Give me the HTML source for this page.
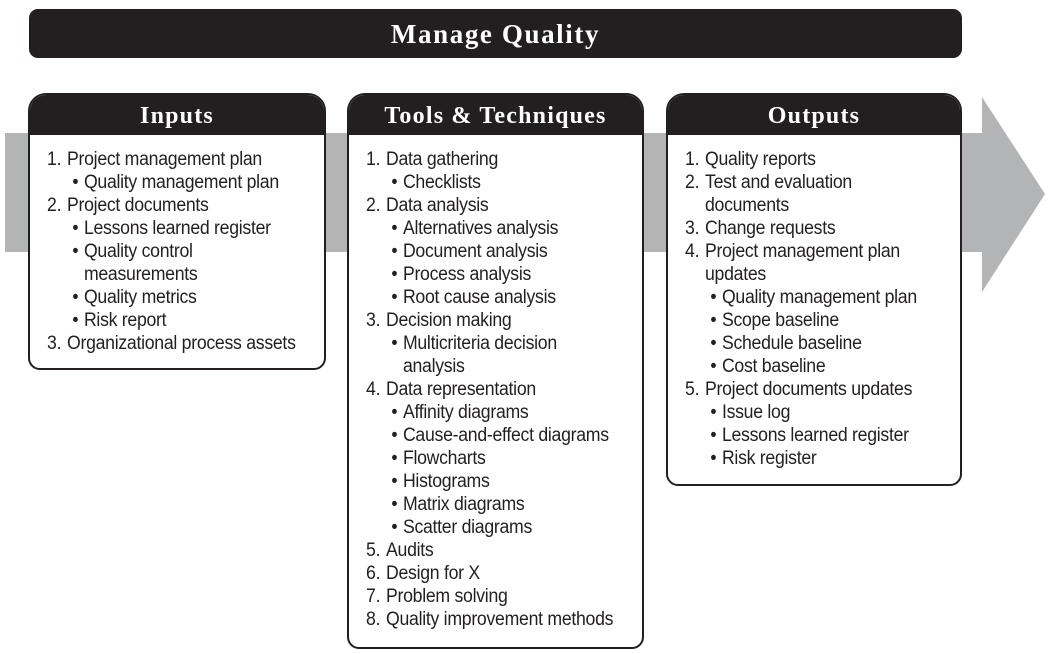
<!DOCTYPE html>
<html><head><meta charset="utf-8"><style>
*{margin:0;padding:0;box-sizing:border-box}
body{width:1053px;height:654px;background:#fff;position:relative;overflow:hidden;font-family:"Liberation Sans",sans-serif;color:#231f20}
.title{position:absolute;left:29px;top:9px;width:933px;height:49px;background:#231f20;border-radius:9px;color:#fff;font:bold 27px/50px "Liberation Serif",serif;text-align:center;letter-spacing:1.6px}
.band{position:absolute;left:5px;top:133px;width:980px;height:119px;background:#b3b4b6}
.box{position:absolute;top:93px;border:2px solid #231f20;border-radius:18px 18px 12px 12px;background:#fff;overflow:hidden}
.hd{height:40px;background:#231f20;color:#fff;font:bold 24px/42px "Liberation Serif",serif;text-align:center;letter-spacing:1.2px}
.bd{padding-top:13px}
.l{height:23px;line-height:23px;font-size:19px;white-space:nowrap;position:relative;letter-spacing:-0.3px;transform:scaleX(0.93);transform-origin:0 50%}
.l span{position:absolute}
.n{padding-left:39.8px}.n span{left:18.3px}
.c{padding-left:39.8px}
.b{padding-left:58px}.b span{left:45.5px}
</style></head><body>
<div class="title">Manage Quality</div>
<div class="band"></div>
<svg style="position:absolute;left:0;top:0" width="1053" height="654"><polygon points="982,97 1045,194 982,292" fill="#b3b4b6"/></svg>

<div class="box" style="left:28px;width:298px;height:277px">
<div class="hd">Inputs</div>
<div class="bd">
<div class="l n"><span>1.</span>Project management plan</div>
<div class="l b"><span>•</span>Quality management plan</div>
<div class="l n"><span>2.</span>Project documents</div>
<div class="l b"><span>•</span>Lessons learned register</div>
<div class="l b"><span>•</span>Quality control</div>
<div class="l b">measurements</div>
<div class="l b"><span>•</span>Quality metrics</div>
<div class="l b"><span>•</span>Risk report</div>
<div class="l n"><span>3.</span>Organizational process assets</div>
</div></div>

<div class="box" style="left:347px;width:297px;height:556px">
<div class="hd">Tools &amp; Techniques</div>
<div class="bd">
<div class="l n"><span>1.</span>Data gathering</div>
<div class="l b"><span>•</span>Checklists</div>
<div class="l n"><span>2.</span>Data analysis</div>
<div class="l b"><span>•</span>Alternatives analysis</div>
<div class="l b"><span>•</span>Document analysis</div>
<div class="l b"><span>•</span>Process analysis</div>
<div class="l b"><span>•</span>Root cause analysis</div>
<div class="l n"><span>3.</span>Decision making</div>
<div class="l b"><span>•</span>Multicriteria decision</div>
<div class="l b">analysis</div>
<div class="l n"><span>4.</span>Data representation</div>
<div class="l b"><span>•</span>Affinity diagrams</div>
<div class="l b"><span>•</span>Cause-and-effect diagrams</div>
<div class="l b"><span>•</span>Flowcharts</div>
<div class="l b"><span>•</span>Histograms</div>
<div class="l b"><span>•</span>Matrix diagrams</div>
<div class="l b"><span>•</span>Scatter diagrams</div>
<div class="l n"><span>5.</span>Audits</div>
<div class="l n"><span>6.</span>Design for X</div>
<div class="l n"><span>7.</span>Problem solving</div>
<div class="l n"><span>8.</span>Quality improvement methods</div>
</div></div>

<div class="box" style="left:666px;width:296px;height:393px">
<div class="hd">Outputs</div>
<div class="bd">
<div class="l n"><span>1.</span>Quality reports</div>
<div class="l n"><span>2.</span>Test and evaluation</div>
<div class="l c">documents</div>
<div class="l n"><span>3.</span>Change requests</div>
<div class="l n"><span>4.</span>Project management plan</div>
<div class="l c">updates</div>
<div class="l b"><span>•</span>Quality management plan</div>
<div class="l b"><span>•</span>Scope baseline</div>
<div class="l b"><span>•</span>Schedule baseline</div>
<div class="l b"><span>•</span>Cost baseline</div>
<div class="l n"><span>5.</span>Project documents updates</div>
<div class="l b"><span>•</span>Issue log</div>
<div class="l b"><span>•</span>Lessons learned register</div>
<div class="l b"><span>•</span>Risk register</div>
</div></div>
</body></html>
